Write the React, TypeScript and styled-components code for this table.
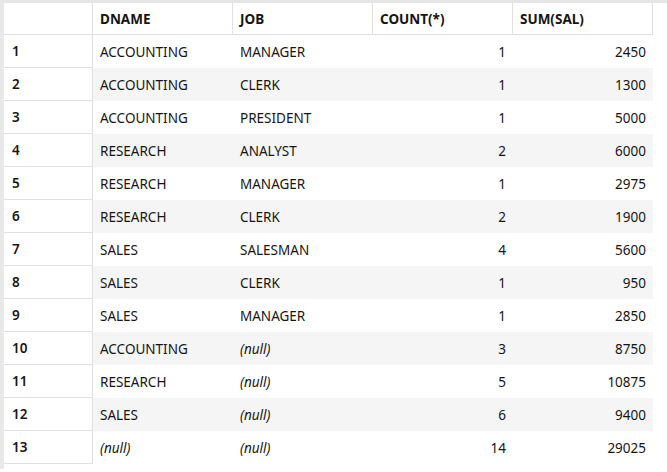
import styled, { createGlobalStyle } from 'styled-components';

const GlobalStyle = createGlobalStyle`
  html, body {
    margin: 0;
    padding: 0;
    background: #fff;
  }

  body {
    font-family: "Noto Sans", "Open Sans", sans-serif;
    color: #161513;
  }
`;

const GridFrame = styled.div`
  border-top: 3px solid #e5e5e5;
  border-left: 4px solid #e8e8e8;
  min-height: 469px;
  box-sizing: border-box;
`;

const ResultTable = styled.table`
  border-collapse: separate;
  border-spacing: 0;
  table-layout: fixed;
  font-size: 13.5px;
`;

const HeadCell = styled.th<{ $width: number }>`
  width: ${({ $width }) => $width}px;
  height: 32px;
  box-sizing: border-box;
  padding: 0 7px;
  text-align: left;
  font-weight: 700;
  border-right: 1px solid #e0e0e0;
  border-bottom: 1px solid #e0e0e0;
  white-space: nowrap;
`;

const DataRow = styled.tr<{ $striped: boolean }>`
  td {
    background: ${({ $striped }) => ($striped ? '#f5f5f5' : '#fff')};
  }
`;

const RowNumber = styled.td`
  height: 32px;
  padding: 0 8px;
  font-weight: 600;
  background: #fff !important;
  border-right: 1px solid #e0e0e0;
  border-bottom: 1px solid #e0e0e0;
`;

const Cell = styled.td<{ $numeric?: boolean }>`
  height: 33px;
  padding: 0 7px;
  box-sizing: border-box;
  text-align: ${({ $numeric }) => ($numeric ? 'right' : 'left')};
  white-space: nowrap;
`;

const Null = styled.span`
  font-style: italic;
`;

interface IRow {
  dname: string | null;
  job: string | null;
  count: number;
  sum: number;
}

const rows: IRow[] = [
  { dname: 'ACCOUNTING', job: 'MANAGER', count: 1, sum: 2450 },
  { dname: 'ACCOUNTING', job: 'CLERK', count: 1, sum: 1300 },
  { dname: 'ACCOUNTING', job: 'PRESIDENT', count: 1, sum: 5000 },
  { dname: 'RESEARCH', job: 'ANALYST', count: 2, sum: 6000 },
  { dname: 'RESEARCH', job: 'MANAGER', count: 1, sum: 2975 },
  { dname: 'RESEARCH', job: 'CLERK', count: 2, sum: 1900 },
  { dname: 'SALES', job: 'SALESMAN', count: 4, sum: 5600 },
  { dname: 'SALES', job: 'CLERK', count: 1, sum: 950 },
  { dname: 'SALES', job: 'MANAGER', count: 1, sum: 2850 },
  { dname: 'ACCOUNTING', job: null, count: 3, sum: 8750 },
  { dname: 'RESEARCH', job: null, count: 5, sum: 10875 },
  { dname: 'SALES', job: null, count: 6, sum: 9400 },
  { dname: null, job: null, count: 14, sum: 29025 },
];

const showValue = (value: string | null) => (value === null ? <Null>(null)</Null> : value);

const App = () => (
  <>
    <GlobalStyle />
    <GridFrame>
      <ResultTable>
        <thead>
          <tr>
            <HeadCell $width={89} />
            <HeadCell $width={140}>DNAME</HeadCell>
            <HeadCell $width={140}>JOB</HeadCell>
            <HeadCell $width={140}>COUNT(*)</HeadCell>
            <HeadCell $width={140}>SUM(SAL)</HeadCell>
          </tr>
        </thead>
        <tbody>
          {rows.map((row, i) => (
            <DataRow key={i} $striped={i % 2 === 1}>
              <RowNumber>{i + 1}</RowNumber>
              <Cell>{showValue(row.dname)}</Cell>
              <Cell>{showValue(row.job)}</Cell>
              <Cell $numeric>{row.count}</Cell>
              <Cell $numeric>{row.sum}</Cell>
            </DataRow>
          ))}
        </tbody>
      </ResultTable>
    </GridFrame>
  </>
);

export default App;
